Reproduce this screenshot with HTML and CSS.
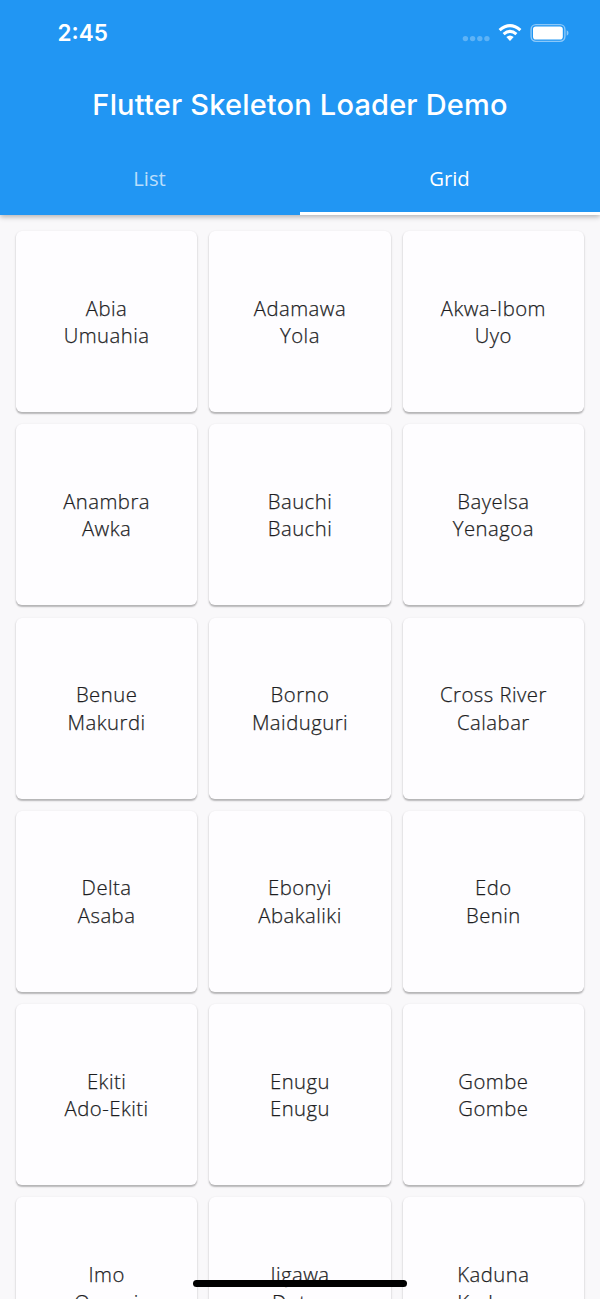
FILE: index.html
```html
<!DOCTYPE html>
<html lang="en">
<head>
<meta charset="utf-8">
<title>Flutter Skeleton Loader Demo</title>
<link rel="stylesheet" href="styles.css">
</head>
<body>
<div class="screen">
  <header class="app-bar">
    <div class="status-bar">
      <span class="clock">2:45</span>
      <svg class="status-icons" width="108" height="20" viewBox="0 0 108 20">
        <g fill="#fff" fill-opacity=".28">
          <circle cx="5.4" cy="15.6" r="2.7"/><circle cx="12.6" cy="15.6" r="2.7"/><circle cx="19.8" cy="15.6" r="2.7"/><circle cx="26.9" cy="15.6" r="2.7"/>
        </g>
        <g fill="none" stroke="#fff" stroke-width="3.1">
          <path d="M39.6 7.2Q50 -2 60.4 7.2"/>
          <path d="M43.6 11.1Q50 5.7 56.4 11.1"/>
        </g>
        <path d="M46.3 14.1Q50 11 53.7 14.1L50 18Z" fill="#fff"/>
        <rect x="71.1" y="1.6" width="33.8" height="16.8" rx="4.8" fill="none" stroke="#fff" stroke-opacity=".48" stroke-width="1.4"/>
        <rect x="73" y="3.5" width="29.8" height="13" rx="2.8" fill="#fff"/>
        <path d="M106.7 7.2Q108.5 8 108.5 10T106.7 12.8Z" fill="#fff" fill-opacity=".48"/>
      </svg>
    </div>
    <h1 class="title">Flutter Skeleton Loader Demo</h1>
    <nav class="tabs">
      <a class="tab">List</a>
      <a class="tab tab-active">Grid</a>
    </nav>
  </header>
  <main class="grid">
    <div class="card"><span>Abia</span><span>Umuahia</span></div>
    <div class="card"><span>Adamawa</span><span>Yola</span></div>
    <div class="card"><span>Akwa-Ibom</span><span>Uyo</span></div>
    <div class="card"><span>Anambra</span><span>Awka</span></div>
    <div class="card"><span>Bauchi</span><span>Bauchi</span></div>
    <div class="card"><span>Bayelsa</span><span>Yenagoa</span></div>
    <div class="card"><span>Benue</span><span>Makurdi</span></div>
    <div class="card"><span>Borno</span><span>Maiduguri</span></div>
    <div class="card"><span>Cross River</span><span>Calabar</span></div>
    <div class="card"><span>Delta</span><span>Asaba</span></div>
    <div class="card"><span>Ebonyi</span><span>Abakaliki</span></div>
    <div class="card"><span>Edo</span><span>Benin</span></div>
    <div class="card"><span>Ekiti</span><span>Ado-Ekiti</span></div>
    <div class="card"><span>Enugu</span><span>Enugu</span></div>
    <div class="card"><span>Gombe</span><span>Gombe</span></div>
    <div class="card"><span>Imo</span><span>Owerri</span></div>
    <div class="card"><span>Jigawa</span><span>Dutse</span></div>
    <div class="card"><span>Kaduna</span><span>Kaduna</span></div>
  </main>
  <div class="home-indicator"></div>
</div>
</body>
</html>
```
FILE: styles.css
```css
* { box-sizing: border-box; }
html, body { margin: 0; overflow: hidden; }
.screen {
  position: relative;
  width: 600px;
  height: 1299px;
  overflow: hidden;
  background: #f9f8fa;
  font-family: "Open Sans", sans-serif;
}
.app-bar {
  position: relative;
  display: flex;
  flex-direction: column;
  height: 214.5px;
  background: #2196f3;
  color: #fff;
  box-shadow: 0 2px 5px rgba(0, 0, 0, .28);
}
.status-bar {
  display: flex;
  justify-content: space-between;
  align-items: center;
  height: 66px;
  padding: 0 32px 0 57.5px;
}
.clock {
  font: 600 22.5px/30px Inter, sans-serif;
}
.status-icons { overflow: visible; }
.title {
  margin: 0;
  height: 78px;
  text-align: center;
  white-space: nowrap;
  font: 500 29px/78px Inter, sans-serif;
  letter-spacing: .18px;
}
.tabs {
  display: flex;
  height: 70.5px;
}
.tab {
  flex: 1;
  padding-right: 1px;
  text-align: center;
  font-size: 20.3px;
  line-height: 69px;
  color: rgba(255, 255, 255, .7);
}
.tab-active {
  color: #fff;
  border-bottom: 3px solid #fff;
}
.grid {
  display: grid;
  grid-template-columns: repeat(3, 181.6px);
  grid-auto-rows: 181px;
  gap: 12.3px 11.8px;
  padding: 16.5px 15.8px;
}
.card {
  display: flex;
  flex-direction: column;
  align-items: center;
  justify-content: center;
  padding-top: 1.2px;
  border-radius: 5.8px;
  background: #fefdff;
  box-shadow: 0 1.5px 1.5px rgba(0, 0, 0, .22), 0 1px 3px rgba(0, 0, 0, .1);
  color: #1d1d1f;
  font-size: 20.3px;
  font-weight: 300;
  line-height: 27.5px;
  letter-spacing: .48px;
  -webkit-text-stroke: .25px #1d1d1f;
}
.home-indicator {
  position: absolute;
  left: 193px;
  bottom: 12px;
  width: 214px;
  height: 7px;
  border-radius: 4px;
  background: #000;
}
```
